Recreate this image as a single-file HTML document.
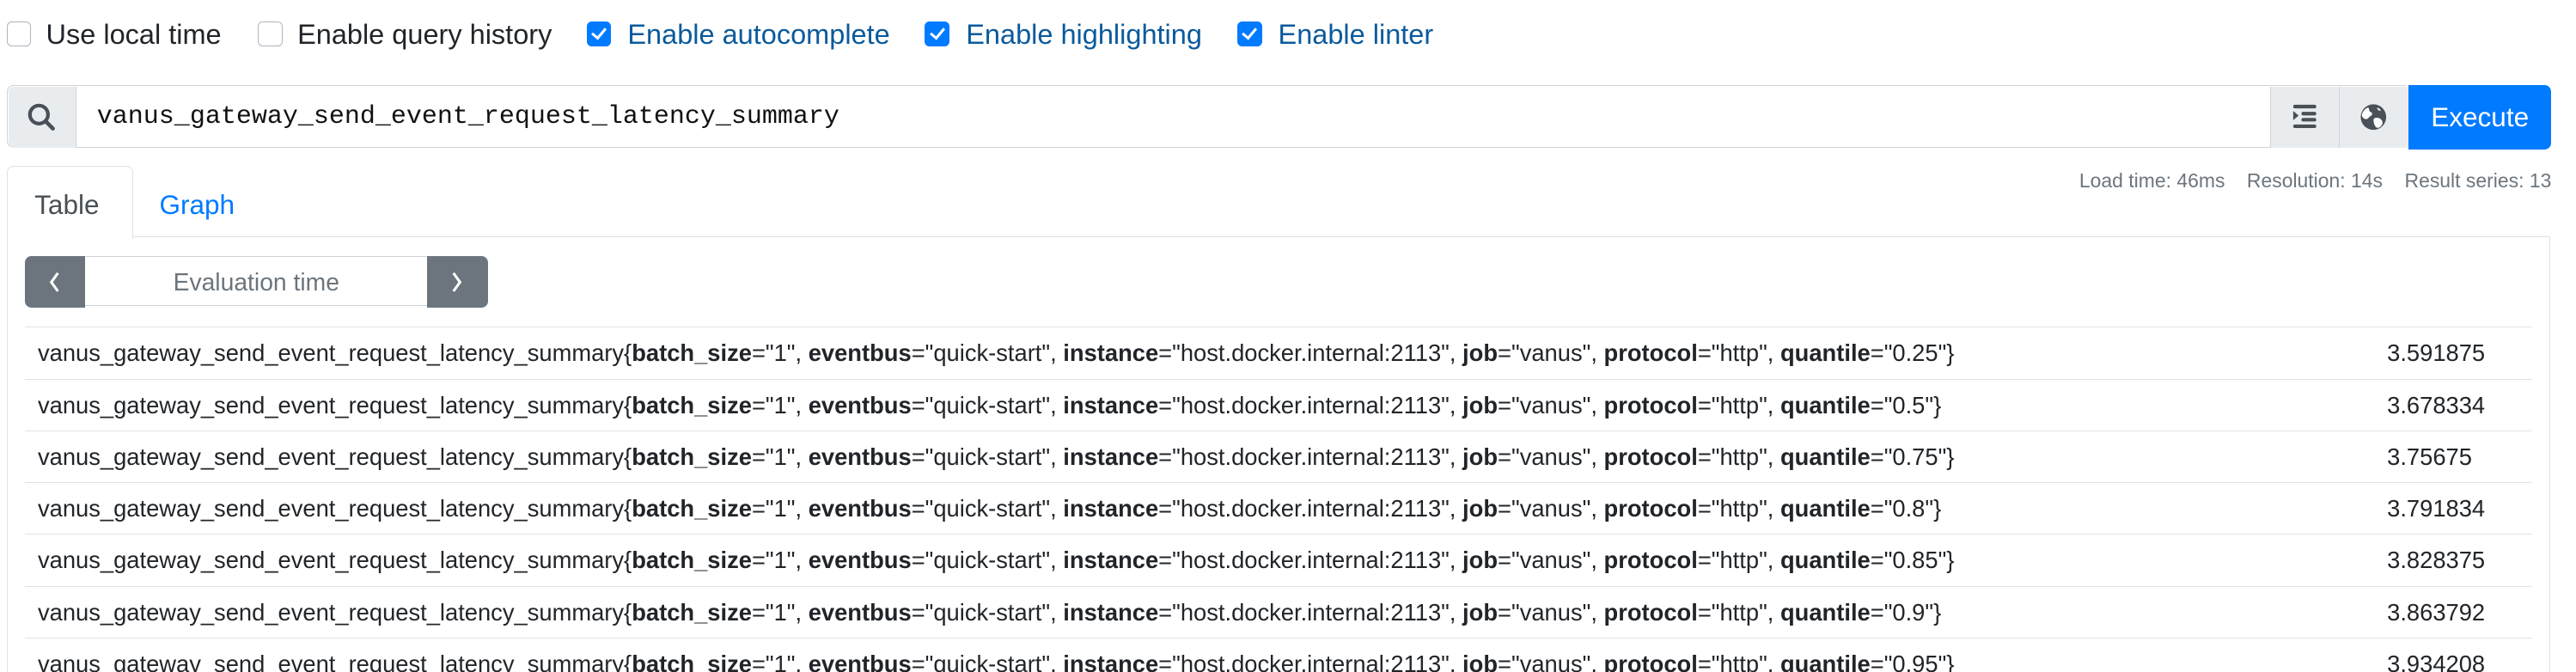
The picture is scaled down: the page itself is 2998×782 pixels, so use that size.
<!DOCTYPE html>
<html><head><meta charset="utf-8"><style>
html,body{margin:0;padding:0;background:#fff;width:2998px;height:782px;overflow:hidden}
#w{zoom:1.912;width:1568px;height:409px;position:relative;overflow:hidden;font-family:"Liberation Sans",Arial,sans-serif;color:#212529}
.a{position:absolute}
.cb{position:absolute;top:13px;width:14px;height:14px;border:1px solid #adb5bd;border-radius:3px;background:#fff}
.cb.on{background:#007bff;border-color:#007bff}
.cb.on:after{content:"";position:absolute;left:4.5px;top:1.5px;width:3.5px;height:7px;border:solid #fff;border-width:0 2px 2px 0;transform:rotate(40deg)}
.lb{position:absolute;top:11px;font-size:17px;line-height:20px}
.lb.on{color:#0a5a9c}
.row{position:absolute;left:15px;width:1526px;height:31px;border-top:1px solid #dee2e6;font-size:14.3px;line-height:31px}
.row .t{position:absolute;left:8px;white-space:nowrap}
.row .v{position:absolute;left:1438px}
b{font-weight:bold}
</style></head><body><div id="w">
<div class="cb" style="left:4px"></div><div class="lb" style="left:28px">Use local time</div>
<div class="cb" style="left:157px"></div><div class="lb" style="left:181px">Enable query history</div>
<div class="cb on" style="left:357px"></div><div class="lb on" style="left:382px">Enable autocomplete</div>
<div class="cb on" style="left:563px"></div><div class="lb on" style="left:588px">Enable highlighting</div>
<div class="cb on" style="left:753px"></div><div class="lb on" style="left:778px">Enable linter</div>

<div class="a" style="left:4px;top:52px;width:1460px;height:37px;border:1px solid #ced4da;border-radius:4px 0 0 4px;border-right:none"></div>
<div class="a" style="left:5px;top:53px;width:41px;height:37px;background:#e9ecef;border-right:1px solid #ced4da;border-radius:3px 0 0 3px"></div>
<svg class="a" style="left:16px;top:62px" width="18" height="18" viewBox="0 0 18 18"><circle cx="7.5" cy="7.5" r="5.5" fill="none" stroke="#495057" stroke-width="2.2"/><line x1="11.5" y1="11.5" x2="16" y2="16" stroke="#495057" stroke-width="2.4" stroke-linecap="round"/></svg>
<div class="a" style="left:59px;top:61px;font-family:'Liberation Mono',monospace;font-size:15.7px;line-height:20px;color:#111">vanus_gateway_send_event_request_latency_summary</div>
<div class="a" style="left:1382px;top:53px;width:41px;height:37px;background:#e9ecef;border-left:1px solid #ced4da;border-right:1px solid #ced4da"></div>
<svg class="a" style="left:1395px;top:63px" width="16" height="16" viewBox="0 0 16 16" fill="#495057"><rect x="1" y="1" width="14" height="2.2" rx="1"/><rect x="6" y="5.3" width="9" height="2.2" rx="1"/><rect x="6" y="9" width="9" height="2.2" rx="1"/><rect x="1" y="13" width="14" height="2.2" rx="1"/><path d="M1 4.8L4.3 7.6 1 10.4z"/></svg>
<div class="a" style="left:1424px;top:53px;width:42px;height:37px;background:#e9ecef"></div>
<svg class="a" style="left:1436px;top:63px" width="17" height="17" viewBox="0 0 16 16"><circle cx="8" cy="8" r="7.3" fill="#495057"/><path d="M5 2.5c1 1 0 2 1.5 2.6 1 .4 1 1.8 0 2.2-1.4.6-1.3 2.2-3.2 1.8-1-.3-1.8-1-2-2.2.4-2 1.8-3.8 3.7-4.4zM9 8.5c1.8-.4 3.2.3 4 1.7.7 1.3-.4 3.3-2 3.9-1.4.4-2.2-1-2.6-2.3-.4-1.3-.7-3 .6-3.3zM10 2.6c1 .2 1.700.7 2.3 1.5-.8.4-1.8.3-2.3-1.5z" fill="#fff"/></svg>
<div class="a" style="left:1466px;top:52px;width:87px;height:39px;background:#007bff;border-radius:0 4px 4px 0;color:#fff;font-size:16.5px;line-height:39px;text-align:center">Execute</div>

<div class="a" style="right:15px;top:103px;font-size:12px;color:#6c757d;white-space:nowrap">Load time: 46ms&nbsp;&nbsp;&nbsp;&nbsp;Resolution: 14s&nbsp;&nbsp;&nbsp;&nbsp;Result series: 13</div>

<div class="a" style="left:4px;top:101px;width:76px;height:44px;border:1px solid #dee2e6;border-bottom:none;border-radius:4px 4px 0 0;background:#fff;z-index:2"></div>
<div class="a" style="left:21px;top:115px;font-size:16.5px;color:#495057;z-index:3">Table</div>
<div class="a" style="left:97px;top:115px;font-size:16.5px;color:#007bff">Graph</div>
<div class="a" style="left:4px;top:144px;width:1547px;height:300px;border:1px solid #dee2e6;border-bottom:none"></div>

<div class="a" style="left:15px;top:156px;width:280px;height:29px;border:1px solid #ced4da;border-radius:4px"></div>
<div class="a" style="left:15px;top:156px;width:37px;height:31px;background:#6c757d;border-radius:4px 0 0 4px"></div>
<div class="a" style="left:260px;top:156px;width:37px;height:31px;background:#6c757d;border-radius:0 4px 4px 0"></div>
<svg class="a" style="left:28px;top:164px" width="10" height="15" viewBox="0 0 10 15"><path d="M7 2L3 7.5 7 13" fill="none" stroke="#fff" stroke-width="1.6"/></svg>
<svg class="a" style="left:273px;top:164px" width="10" height="15" viewBox="0 0 10 15"><path d="M3 2L7 7.5 3 13" fill="none" stroke="#fff" stroke-width="1.6"/></svg>
<div class="a" style="left:52px;top:156px;width:208px;line-height:32px;text-align:center;font-size:14.8px;color:#6c757d">Evaluation time</div>

<div class="row" style="top:199px"><span class="t">vanus_gateway_send_event_request_latency_summary{<b>batch_size</b>="1", <b>eventbus</b>="quick-start", <b>instance</b>="host.docker.internal:2113", <b>job</b>="vanus", <b>protocol</b>="http", <b>quantile</b>="0.25"}</span><span class="v">3.591875</span></div>
<div class="row" style="top:230.5px"><span class="t">vanus_gateway_send_event_request_latency_summary{<b>batch_size</b>="1", <b>eventbus</b>="quick-start", <b>instance</b>="host.docker.internal:2113", <b>job</b>="vanus", <b>protocol</b>="http", <b>quantile</b>="0.5"}</span><span class="v">3.678334</span></div>
<div class="row" style="top:262px"><span class="t">vanus_gateway_send_event_request_latency_summary{<b>batch_size</b>="1", <b>eventbus</b>="quick-start", <b>instance</b>="host.docker.internal:2113", <b>job</b>="vanus", <b>protocol</b>="http", <b>quantile</b>="0.75"}</span><span class="v">3.75675</span></div>
<div class="row" style="top:293.5px"><span class="t">vanus_gateway_send_event_request_latency_summary{<b>batch_size</b>="1", <b>eventbus</b>="quick-start", <b>instance</b>="host.docker.internal:2113", <b>job</b>="vanus", <b>protocol</b>="http", <b>quantile</b>="0.8"}</span><span class="v">3.791834</span></div>
<div class="row" style="top:325px"><span class="t">vanus_gateway_send_event_request_latency_summary{<b>batch_size</b>="1", <b>eventbus</b>="quick-start", <b>instance</b>="host.docker.internal:2113", <b>job</b>="vanus", <b>protocol</b>="http", <b>quantile</b>="0.85"}</span><span class="v">3.828375</span></div>
<div class="row" style="top:356.5px"><span class="t">vanus_gateway_send_event_request_latency_summary{<b>batch_size</b>="1", <b>eventbus</b>="quick-start", <b>instance</b>="host.docker.internal:2113", <b>job</b>="vanus", <b>protocol</b>="http", <b>quantile</b>="0.9"}</span><span class="v">3.863792</span></div>
<div class="row" style="top:388px"><span class="t">vanus_gateway_send_event_request_latency_summary{<b>batch_size</b>="1", <b>eventbus</b>="quick-start", <b>instance</b>="host.docker.internal:2113", <b>job</b>="vanus", <b>protocol</b>="http", <b>quantile</b>="0.95"}</span><span class="v">3.934208</span></div>
</div></body></html>
